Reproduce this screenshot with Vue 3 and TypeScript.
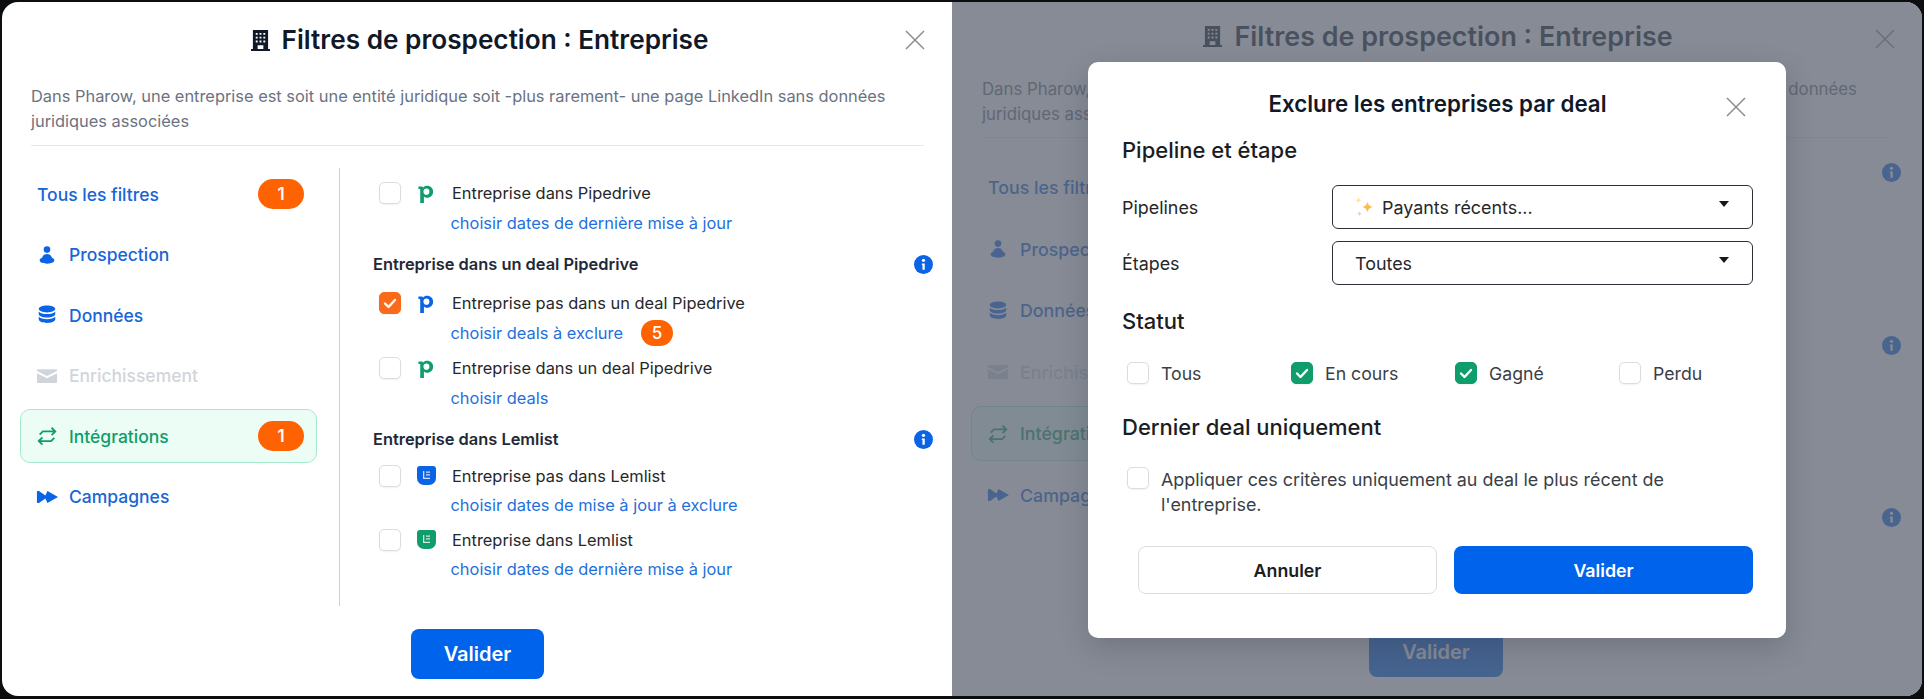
<script setup lang="ts">
/* Two frames side by side: the filter panel alone, then the same panel behind the deal dialog */
interface NavItem {
  label: string
  path: string
  line?: boolean
  badge?: string
  state?: 'active' | 'off'
}
interface Option {
  label: string
  link: string
  logo: 'pipe' | 'lem'
  color: string
  checked?: boolean
  badge?: string
}
interface Group {
  title?: string
  info: boolean
  options: Option[]
}

const navItems: NavItem[] = [
  { label: 'Tous les filtres', path: '', badge: '1' },
  {
    label: 'Prospection',
    path: 'M12 2.5a3.6 3.6 0 1 1 0 7.2 3.6 3.6 0 0 1 0-7.2zM12 11c3 0 4.6 1.7 5.4 4 1.6.5 2.6 1.5 2.6 2.8 0 2.2-3.6 3.7-8 3.7s-8-1.5-8-3.7c0-1.3 1-2.3 2.6-2.8.8-2.3 2.4-4 5.4-4z',
  },
  {
    label: 'Données',
    path: 'M12 1.5c5 0 9 1.5 9 3.8s-4 3.9-9 3.9-9-1.6-9-3.9 4-3.8 9-3.8zM3 8.2c1.5 1.9 5 2.8 9 2.8s7.5-.9 9-2.8v2.6c0 2.3-4 3.9-9 3.9s-9-1.6-9-3.9zM3 13.7c1.5 1.9 5 2.8 9 2.8s7.5-.9 9-2.8v3c0 2.3-4 4-9 4s-9-1.7-9-4z',
  },
  {
    label: 'Enrichissement',
    path: 'M2 4.5h20c.6 0 1 .4 1 1v1L12 12 1 6.5v-1c0-.6.4-1 1-1zM1 9l11 5.5L23 9v9.5c0 .6-.4 1-1 1H2c-.6 0-1-.4-1-1z',
    state: 'off',
  },
  {
    label: 'Intégrations',
    path: 'M4 10.5 7.5 7H21M17 3l4 4-4 4M20 14l-3.5 3.5H3M7 13.5l-4 4 4 4',
    line: true,
    badge: '1',
    state: 'active',
  },
  {
    label: 'Campagnes',
    path: 'M1 6.5c0-.6.3-1 .9-1h1.4L12.5 12l-9.2 6.5H1.9c-.6 0-.9-.4-.9-1zM12.5 5.5 24 12l-11.5 6.5L9.5 12z',
  },
]

const groups: Group[] = [
  {
    info: false,
    options: [
      { label: 'Entreprise dans Pipedrive', link: 'choisir dates de dernière mise à jour', logo: 'pipe', color: '#0f9d6b' },
    ],
  },
  {
    title: 'Entreprise dans un deal Pipedrive',
    info: true,
    options: [
      { label: 'Entreprise pas dans un deal Pipedrive', link: 'choisir deals à exclure', logo: 'pipe', color: '#0b63e5', checked: true, badge: '5' },
      { label: 'Entreprise dans un deal Pipedrive', link: 'choisir deals', logo: 'pipe', color: '#0f9d6b' },
    ],
  },
  {
    title: 'Entreprise dans Lemlist',
    info: true,
    options: [
      { label: 'Entreprise pas dans Lemlist', link: 'choisir dates de mise à jour à exclure', logo: 'lem', color: '#0b63e5' },
      { label: 'Entreprise dans Lemlist', link: 'choisir dates de dernière mise à jour', logo: 'lem', color: '#0f9d6b' },
    ],
  },
]

const statuses = [
  { label: 'Tous', checked: false },
  { label: 'En cours', checked: true },
  { label: 'Gagné', checked: true },
  { label: 'Perdu', checked: false },
]

const panels = [{ back: false }, { back: true }]
</script>

<template>
  <main class="page">
    <section v-for="panel in panels" :key="String(panel.back)" class="panel" :class="{ 'panel--back': panel.back }">
      <header class="panel__head">
        <h1 class="panel__title">
          <svg class="building" viewBox="0 0 20 22" aria-hidden="true">
            <path fill-rule="evenodd" d="M2 0h16v20h2v2H0v-2h2zM5 3v2h2V3zM9 3v2h2V3zM13 3v2h2V3zM5 7v2h2V7zM9 7v2h2V7zM13 7v2h2V7zM5 11v2h2v-2zM9 11v2h2v-2zM13 11v2h2v-2zM7 16v4h6v-4z" />
          </svg>
          Filtres de prospection : Entreprise
        </h1>
        <svg class="close" viewBox="0 0 20 20" aria-hidden="true"><path d="M1 1l18 18M19 1L1 19" /></svg>
      </header>

      <p class="panel__desc">
        Dans Pharow, une entreprise est soit une entité juridique soit -plus rarement- une page LinkedIn sans données
        juridiques associées
      </p>
      <hr class="panel__rule" />

      <div class="panel__body">
        <nav class="nav">
          <a
            v-for="item in navItems"
            :key="item.label"
            class="nav__item"
            :class="item.state && `nav__item--${item.state}`"
          >
            <svg v-if="item.path" class="nav__icon" :class="{ 'nav__icon--line': item.line }" viewBox="0 0 24 24" aria-hidden="true">
              <path :d="item.path" />
            </svg>
            <span class="nav__label">{{ item.label }}</span>
            <span v-if="item.badge" class="pill">{{ item.badge }}</span>
          </a>
        </nav>

        <!-- behind the dialog only the info buttons stay visible -->
        <div v-if="panel.back" class="ghost-list">
          <svg v-for="n in 3" :key="n" class="info" viewBox="0 0 20 20" aria-hidden="true">
            <circle cx="10" cy="10" r="10" />
            <circle cx="10" cy="5.6" r="1.7" fill="#fff" />
            <path d="M8.3 9h3v6.5H8.9v-5H8.3z" fill="#fff" />
          </svg>
        </div>
        <div v-else class="list">
          <div v-for="(group, g) in groups" :key="g" class="group">
            <div v-if="group.title" class="group__head">
              <h2 class="group__title">{{ group.title }}</h2>
              <svg class="info" viewBox="0 0 20 20" aria-hidden="true">
                <circle cx="10" cy="10" r="10" />
                <circle cx="10" cy="5.6" r="1.7" fill="#fff" />
                <path d="M8.3 9h3v6.5H8.9v-5H8.3z" fill="#fff" />
              </svg>
            </div>
            <div v-for="option in group.options" :key="option.label" class="option">
              <div class="option__row">
                <span class="check" :class="{ 'check--orange': option.checked }">
                  <svg v-if="option.checked" viewBox="0 0 20 20" aria-hidden="true"><path d="M5 10.5l3.5 3.5L15 7" /></svg>
                </span>
                <span class="option__logo">
                  <svg v-if="option.logo === 'pipe'" class="logo-pipe" viewBox="0 0 16 19" aria-hidden="true">
                    <path
                      :fill="option.color"
                      fill-rule="evenodd"
                      d="M0 1.5h4.3l.5 1.3C5.9 1.4 7.4.7 9 .7c3.9 0 6.5 2.7 6.5 6.3s-2.7 6.4-6.3 6.4c-1.4 0-2.6-.5-3.4-1.3V19H1.9V4.700c0-.3-.2-.5-.5-.5H0zM8.5 3.700c-1.900 0-3.200 1.300-3.200 3.300s1.300 3.400 3.200 3.400 3.100-1.400 3.100-3.400-1.200-3.300-3.100-3.300z"
                    />
                  </svg>
                  <svg v-else class="logo-lem" viewBox="0 0 19 19" aria-hidden="true">
                    <path :fill="option.color" d="M3 0h13a3 3 0 0 1 3 3v9a7 7 0 0 1-7 7H7a7 7 0 0 1-7-7V3a3 3 0 0 1 3-3z" />
                    <path d="M6 5v8h7v-1.3H7.3V5zM9 5.5h4v1.2H9zM9 8.3h4v1.200H9z" fill="#fff" opacity=".8" />
                  </svg>
                </span>
                <span class="option__label">{{ option.label }}</span>
              </div>
              <div class="option__sub">
                <a class="option__link">{{ option.link }}</a>
                <span v-if="option.badge" class="pill pill--small">{{ option.badge }}</span>
              </div>
            </div>
          </div>
        </div>
      </div>

      <footer class="panel__foot">
        <button class="btn btn--primary btn--main" type="button">Valider</button>
      </footer>

      <div v-if="panel.back" class="overlay">
        <div class="dialog" role="dialog">
          <header class="dialog__head">
            <h2 class="dialog__title">Exclure les entreprises par deal</h2>
            <svg class="close" viewBox="0 0 20 20" aria-hidden="true"><path d="M1 1l18 18M19 1L1 19" /></svg>
          </header>

          <h3 class="dialog__section dialog__section--first">Pipeline et étape</h3>
          <div class="field">
            <span class="field__label">Pipelines</span>
            <div class="select">
              <svg class="sparkle" viewBox="0 0 20 20" aria-hidden="true">
                <path fill="#fdbb4d" d="M12.5 4.5c.7 3.3 2 4.7 5.5 5.5-3.5.8-4.8 2.2-5.5 5.5-.7-3.3-2-4.7-5.5-5.5 3.5-.8 4.8-2.2 5.5-5.5z" />
                <path fill="#fde2a0" d="M3.5 0c.4 2 1 2.7 2.8 3.2C4.500 3.700 3.900 4.400 3.500 6.400 3.100 4.400 2.500 3.700.7 3.200 2.500 2.700 3.100 2 3.500 0z" />
                <path fill="#fcd08a" d="M4.5 14c.3 1.7.9 2.3 2.4 2.7-1.5.4-2.1 1-2.4 2.7-.3-1.7-.9-2.3-2.4-2.7 1.5-.4 2.100-1 2.400-2.700z" />
              </svg>
              <span>Payants récents...</span>
              <i class="select__caret"></i>
            </div>
          </div>
          <div class="field field--next">
            <span class="field__label">Étapes</span>
            <div class="select">
              <span>Toutes</span>
              <i class="select__caret"></i>
            </div>
          </div>

          <h3 class="dialog__section dialog__section--status">Statut</h3>
          <div class="statuses">
            <label v-for="status in statuses" :key="status.label" class="status">
              <span class="check" :class="{ 'check--green': status.checked }">
                <svg v-if="status.checked" viewBox="0 0 20 20" aria-hidden="true"><path d="M5 10.5l3.5 3.5L15 7" /></svg>
              </span>
              {{ status.label }}
            </label>
          </div>

          <h3 class="dialog__section dialog__section--last">Dernier deal uniquement</h3>
          <label class="only-last">
            <span class="check"></span>
            <span class="only-last__text">Appliquer ces critères uniquement au deal le plus récent de l'entreprise.</span>
          </label>

          <div class="dialog__actions">
            <button class="btn btn--ghost" type="button">Annuler</button>
            <button class="btn btn--primary" type="button">Valider</button>
          </div>
        </div>
      </div>
    </section>
  </main>
</template>

<style>
html,
body {
  margin: 0;
  background: #0c0d0f;
}
</style>

<style scoped>
/* ---- frame ---- */
.page {
  display: flex;
  width: 1924px;
  height: 699px;
  padding: 2px 2px 3px;
  box-sizing: border-box;
  overflow: hidden;
  font-family: Inter, "Liberation Sans", sans-serif;
  color: #111827;
  background: #0c0d0f;
}

.panel {
  position: relative;
  width: 950px;
  flex: none;
  padding: 20px 28px 17px 29px;
  box-sizing: border-box;
  display: flex;
  flex-direction: column;
  background: #fff;
  border-radius: 16px 0 0 16px;
  overflow: hidden;
}

.panel--back {
  width: 970px;
  padding: 17px 32px 19px 30px;
  border-radius: 0 16px 16px 0;
}

/* ---- panel head ---- */
.panel__head {
  display: grid;
  grid-template-columns: 1fr auto 1fr;
  align-items: center;
  height: 34px;
  padding-left: 4px;
}

.panel__title {
  grid-column: 2;
  margin: 1px 0 0;
  display: flex;
  align-items: center;
  gap: 12px;
  font-size: 26.2px;
  font-weight: 600;
  line-height: 34px;
  white-space: nowrap;
}

.panel--back .panel__title {
  margin-top: 0;
  font-size: 26.9px;
}

.building {
  width: 19px;
  height: 23px;
  fill: #111827;
}

.close {
  grid-column: 3;
  justify-self: end;
  width: 20px;
  height: 20px;
  margin-right: -1px;
  fill: none;
  stroke: #8c8c8c;
  stroke-width: 1.5;
}

.panel--back .close {
  margin: 5px -5px 0 0;
}

.panel__desc {
  margin: 28px 0 0;
  font-size: 16.4px;
  line-height: 25px;
  color: #6b7280;
}

.panel--back .panel__desc {
  margin-top: 24px;
  font-size: 16.8px;
}

.panel__rule {
  width: 100%;
  height: 1px;
  margin: 11px 0 0;
  border: 0;
  background: #e5e7eb;
}

.panel--back .panel__rule {
  margin-top: 10px;
}

/* ---- body ---- */
.panel__body {
  flex: 1;
  min-height: 0;
  margin-top: 22px;
  display: flex;
  align-items: stretch;
}

.nav {
  width: 297px;
  flex: none;
  margin: -1px 22px 0 -11px;
  display: flex;
  flex-direction: column;
  gap: 6.5px;
}

.panel--back .nav {
  gap: 6.6px;
  margin-top: 0;
}

.nav__item {
  height: 54px;
  padding: 0 12px 0 16px;
  box-sizing: border-box;
  display: flex;
  align-items: center;
  gap: 12px;
  border: 1px solid transparent;
  border-radius: 10px;
  font-size: 17.5px;
  font-weight: 500;
  color: #1766d6;
}

.panel--back .nav__item {
  height: 55px;
  font-size: 17.8px;
}

.nav__item--off {
  color: #d1d5db;
}

.nav__item--active {
  color: #0f9d6b;
  background: #ecfdf5;
  border-color: #a7e9cf;
}

.nav__icon {
  width: 22px;
  height: 22px;
  margin: 0 -1px;
  flex: none;
  fill: #0b63e5;
}

.nav__item--off .nav__icon {
  fill: #d1d5db;
}

.nav__icon--line {
  fill: none;
  stroke: #0f9d6b;
  stroke-width: 2;
}

.nav__label {
  flex: 1;
}

.pill {
  min-width: 46px;
  height: 30px;
  border-radius: 15px;
  display: inline-flex;
  align-items: center;
  justify-content: center;
  background: #ff6200;
  color: #fff;
  font-size: 17px;
  font-weight: 600;
}

.pill--small {
  min-width: 32px;
  height: 26px;
  margin-left: 18px;
  font-weight: 500;
}

/* ---- option list ---- */
.list,
.ghost-list {
  flex: 1;
  min-width: 0;
  margin-right: -9px;
  border-left: 1px solid #cfd1d4;
}

.list {
  padding: 13px 0 0 33px;
}

.ghost-list {
  padding-top: 3px;
  display: flex;
  flex-direction: column;
  align-items: flex-end;
  gap: 153.5px;
  border-left: 0;
  margin-right: -11px;
}

.group__head {
  height: 24px;
  margin: 17px 0 15px;
  display: flex;
  align-items: center;
  justify-content: space-between;
}

.group:last-child .group__head {
  margin: 17.5px 0 13px;
}

.group__title {
  margin: 0;
  font-size: 16.4px;
  font-weight: 600;
  color: #1f2937;
}

.info {
  width: 19px;
  height: 19px;
  flex: none;
  fill: #0b63e5;
}

.option + .option {
  margin-top: 11.5px;
}

.group:last-child .option + .option {
  margin-top: 11px;
}

.option__row {
  height: 24px;
  padding-left: 6px;
  display: flex;
  align-items: center;
}

.check {
  width: 22px;
  height: 22px;
  flex: none;
  box-sizing: border-box;
  display: inline-flex;
  border: 1.5px solid #dcdde0;
  border-radius: 5px;
  background: #fff;
  box-shadow: 0 1px 2px rgba(17, 24, 39, 0.06);
}

.check svg {
  width: 100%;
  height: 100%;
  fill: none;
  stroke: #fff;
  stroke-width: 2.4;
  stroke-linecap: round;
  stroke-linejoin: round;
}

.check--orange {
  background: #f96a1b;
  border-color: #f96a1b;
}

.check--green {
  background: #0f9d6b;
  border-color: #0f9d6b;
}

.option__logo {
  width: 34px;
  height: 24px;
  margin-left: 17px;
  flex: none;
}

.logo-pipe {
  display: block;
  width: 16px;
  height: 18px;
  margin-top: 4px;
}

.logo-lem {
  display: block;
  width: 19px;
  height: 19px;
  margin: 2px 0 0 -1px;
}

.option__label {
  font-size: 16.4px;
  color: #27272a;
}

.option__sub {
  height: 24px;
  margin: 5.5px 0 0 77.5px;
  display: flex;
  align-items: center;
}

.group:first-child .option__sub {
  margin-top: 6px;
}

.group:last-child .option__sub {
  margin-top: 5px;
}

.option__link {
  font-size: 16.4px;
  color: #1f6fdc;
}

/* ---- buttons ---- */
.panel__foot {
  display: flex;
  justify-content: center;
  margin-top: 23px;
}

.btn {
  height: 48px;
  border-radius: 8px;
  font: 600 17.8px Inter, "Liberation Sans", sans-serif;
  cursor: pointer;
}

.btn--primary {
  border: 0;
  background: #0063eb;
  color: #fff;
}

.btn--main {
  width: 133px;
  height: 50px;
  font-size: 20px;
}

.panel--back .btn--main {
  width: 134px;
}

.btn--ghost {
  border: 1.5px solid #dcdde0;
  background: #fff;
  color: #1a1d23;
}

/* ---- dialog ---- */
.overlay {
  position: absolute;
  inset: 0;
  display: flex;
  align-items: center;
  justify-content: center;
  background: rgba(93, 100, 113, 0.75);
}

.dialog {
  width: 698px;
  height: 576px;
  margin-top: 2px;
  padding: 26px 33px 0 34px;
  box-sizing: border-box;
  background: #fff;
  border-radius: 10px;
  box-shadow: 0 10px 30px rgba(17, 24, 39, 0.18);
}

.dialog__head {
  display: grid;
  grid-template-columns: 1fr auto 1fr;
  align-items: center;
  height: 30px;
}

.dialog__title {
  grid-column: 2;
  margin: 0;
  font-size: 22.3px;
  font-weight: 600;
  white-space: nowrap;
}

.dialog__head .close {
  margin: 8px 7px 0 0;
}

.dialog__section {
  height: 28px;
  margin: 0;
  font-size: 22px;
  font-weight: 500;
  line-height: 28px;
  color: #1a1d23;
}

.dialog__section--first {
  margin-top: 18px;
}

.dialog__section--status {
  margin-top: 22px;
}

.dialog__section--last {
  margin-top: 29px;
}

.field {
  margin-top: 21px;
  display: grid;
  grid-template-columns: 210px 1fr;
  align-items: center;
  font-size: 17.9px;
  color: #27272a;
}

.field--next {
  margin-top: 12px;
}

.select {
  position: relative;
  height: 44px;
  padding: 0 22px;
  box-sizing: border-box;
  display: flex;
  align-items: center;
  gap: 7px;
  border: 1.7px solid #2b2f36;
  border-radius: 6px;
}

.sparkle {
  width: 20px;
  height: 20px;
  flex: none;
}

.select__caret {
  position: absolute;
  right: 23px;
  top: 15px;
  border-top: 6px solid #16181d;
  border-left: 5px solid transparent;
  border-right: 5px solid transparent;
}

.statuses {
  margin-top: 27px;
  padding-left: 5px;
  display: grid;
  grid-template-columns: repeat(4, 164px);
}

.status {
  height: 22px;
  display: flex;
  align-items: center;
  gap: 12px;
  font-size: 17.7px;
  color: #3a3f47;
}

.only-last {
  margin-top: 26px;
  padding-left: 5px;
  display: flex;
  gap: 12px;
  font-size: 17.9px;
  line-height: 25px;
  color: #3a3f47;
}

.only-last__text {
  max-width: 540px;
}

.dialog__actions {
  margin: 29px 0 0 16px;
  display: grid;
  grid-template-columns: 1fr 1fr;
  gap: 17px;
}
</style>
